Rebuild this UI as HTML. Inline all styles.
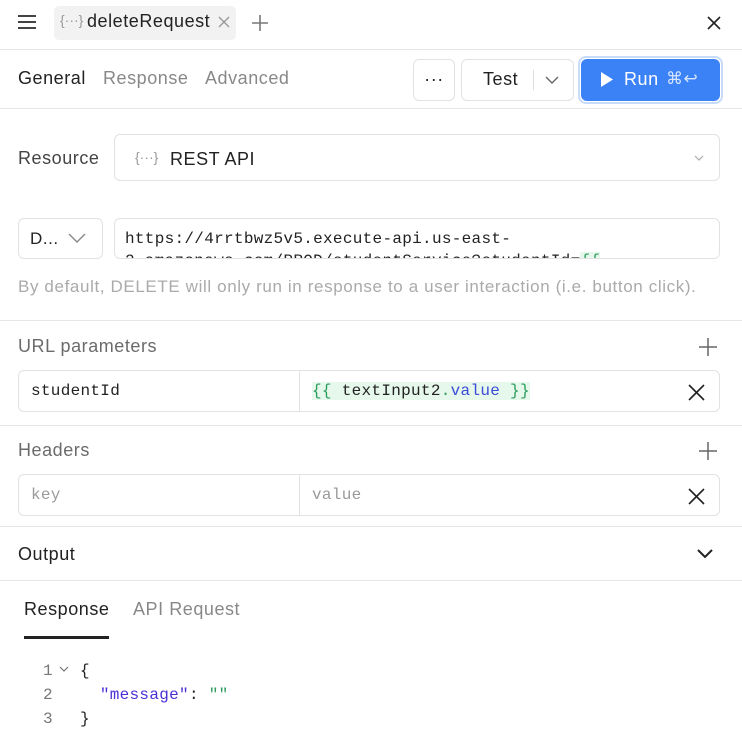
<!DOCTYPE html>
<html><head><meta charset="utf-8"><style>
*{box-sizing:border-box;margin:0;padding:0}
body{width:742px;height:736px;overflow:hidden;background:#fff;font-family:"Liberation Sans",sans-serif;color:#222;position:relative;letter-spacing:0.55px}
.a{position:absolute;white-space:nowrap}
.mono{font-family:"Liberation Mono",monospace;letter-spacing:0.3px}
.box{border:1px solid #e2e2e2;border-radius:6px;background:#fff}
.hr{position:absolute;left:0;width:742px;height:1px;background:#e6e6e6}
.lbl{font-size:18px;color:#6b6b6b}
</style></head><body>
<div class="a" style="left:18px;top:15px;width:18px;height:14px;border-top:2px solid #444;border-bottom:2px solid #444"><div style="margin-top:4px;height:2px;background:#444"></div></div>
<div class="a" style="left:54px;top:6px;width:182px;height:34px;background:#f2f2f2;border-radius:5px"></div>
<div class="a" style="left:60px;top:12px;font-size:14px;color:#999;letter-spacing:0">{···}</div>
<div class="a" style="left:87px;top:11px;font-size:18px;color:#222">deleteRequest</div>
<svg class="a" style="left:217px;top:15px" width="14" height="14"><path d="M2 2L12 12M12 2L2 12" stroke="#999" stroke-width="1.4"/></svg>
<svg class="a" style="left:251px;top:14px" width="18" height="18"><path d="M9 1V17M1 9H17" stroke="#777" stroke-width="1.6"/></svg>
<svg class="a" style="left:707px;top:16px" width="14" height="14"><path d="M1 1L13 13M13 1L1 13" stroke="#222" stroke-width="1.6"/></svg>
<div class="hr" style="top:49px"></div>
<div class="a" style="left:18px;top:68px;font-size:18px;color:#222">General</div>
<div class="a" style="left:103px;top:68px;font-size:18px;color:#888">Response</div>
<div class="a" style="left:205px;top:68px;font-size:18px;color:#888">Advanced</div>
<div class="a box" style="left:413px;top:59px;width:42px;height:42px;text-align:center;font-size:18px;line-height:38px">···</div>
<div class="a box" style="left:461px;top:59px;width:113px;height:42px"></div>
<div class="a" style="left:483px;top:69px;font-size:18px">Test</div>
<div class="a" style="left:533px;top:70px;width:1px;height:20px;background:#ddd"></div>
<svg class="a" style="left:545px;top:75px" width="14" height="10"><path d="M1 2L7 8L13 2" stroke="#666" stroke-width="1.4" fill="none"/></svg>
<div class="a" style="left:578px;top:56px;width:145px;height:48px;border:2px solid #c8dbfb;border-radius:8px"></div>
<div class="a" style="left:581px;top:59px;width:139px;height:42px;background:#3b82f6;border-radius:6px"></div>
<svg class="a" style="left:600px;top:71px" width="14" height="17"><path d="M1 1 L13 8.5 L1 16Z" fill="#fff"/></svg>
<div class="a" style="left:624px;top:69px;font-size:18px;color:#fff">Run</div>
<div class="a" style="left:666px;top:69px;font-size:17px;color:#d6e4fd">⌘↩</div>
<div class="hr" style="top:108px"></div>
<div class="a" style="left:18px;top:148px;font-size:18px;color:#444">Resource</div>
<div class="a box" style="left:114px;top:134px;width:606px;height:47px"></div>
<div class="a" style="left:135px;top:149px;font-size:14px;color:#999;letter-spacing:0">{···}</div>
<div class="a" style="left:170px;top:149px;font-size:18px;color:#222">REST API</div>
<svg class="a" style="left:694px;top:155px" width="10" height="7"><path d="M1 1L5 5L9 1" stroke="#aaa" stroke-width="1.2" fill="none"/></svg>
<div class="a box" style="left:18px;top:218px;width:85px;height:41px"></div>
<div class="a" style="left:30px;top:229px;font-size:17px">D...</div>
<svg class="a" style="left:68px;top:233px" width="18" height="11"><path d="M1 1L9 9L17 1" stroke="#888" stroke-width="1.4" fill="none"/></svg>
<div class="a box" style="left:114px;top:218px;width:606px;height:41px;overflow:hidden">
<div class="mono" style="position:absolute;left:10px;top:9px;font-size:16px;line-height:22px;color:#222;white-space:nowrap">https://4rrtbwz5v5.execute-api.us-east-<br>2.amazonaws.com/PROD/studentService?studentId=<span style="background:#e6f7ec;color:#2a9d5c">{{</span></div></div>
<div class="a" style="left:18px;top:277px;font-size:17px;color:#aaa;letter-spacing:0.62px">By default, DELETE will only run in response to a user interaction (i.e. button click).</div>
<div class="hr" style="top:320px"></div>
<div class="a lbl" style="left:18px;top:336px">URL parameters</div>
<svg class="a" style="left:698px;top:337px" width="20" height="20"><path d="M10 1V19M1 10H19" stroke="#666" stroke-width="1.5"/></svg>
<div class="a box" style="left:18px;top:370px;width:702px;height:42px"></div>
<div class="a" style="left:299px;top:371px;width:1px;height:40px;background:#e2e2e2"></div>
<div class="a mono" style="left:31px;top:382px;font-size:16px">studentId</div>
<div class="a mono" style="left:312px;top:382px;font-size:16px;background:#e6f7ec;color:#2a9d5c">{{ <span style="color:#222">textInput2</span>.<span style="color:#3b4bd8">value</span> }}</div>
<svg class="a" style="left:688px;top:384px" width="17" height="17"><path d="M1 1L16 16M16 1L1 16" stroke="#222" stroke-width="1.6"/></svg>
<div class="hr" style="top:425px"></div>
<div class="a lbl" style="left:18px;top:440px">Headers</div>
<svg class="a" style="left:698px;top:441px" width="20" height="20"><path d="M10 1V19M1 10H19" stroke="#666" stroke-width="1.5"/></svg>
<div class="a box" style="left:18px;top:474px;width:702px;height:42px"></div>
<div class="a" style="left:299px;top:475px;width:1px;height:40px;background:#e2e2e2"></div>
<div class="a mono" style="left:31px;top:486px;font-size:16px;color:#999">key</div>
<div class="a mono" style="left:312px;top:486px;font-size:16px;color:#999">value</div>
<svg class="a" style="left:688px;top:488px" width="17" height="17"><path d="M1 1L16 16M16 1L1 16" stroke="#222" stroke-width="1.6"/></svg>
<div class="hr" style="top:526px"></div>
<div class="a" style="left:18px;top:544px;font-size:18px;color:#222">Output</div>
<svg class="a" style="left:696px;top:548px" width="18" height="12"><path d="M2 2 L9 9 L16 2" stroke="#222" stroke-width="2" fill="none"/></svg>
<div class="hr" style="top:580px"></div>
<div class="a" style="left:24px;top:599px;font-size:18px;color:#222">Response</div>
<div class="a" style="left:133px;top:599px;font-size:18px;color:#888">API Request</div>
<div class="a" style="left:24px;top:636px;width:85px;height:3px;background:#222"></div>
<div class="a mono" style="left:43px;top:659px;font-size:16px;line-height:24px;color:#777">1<br>2<br>3</div>
<svg class="a" style="left:59px;top:666px" width="10" height="7"><path d="M1 1L5 5L9 1" stroke="#777" stroke-width="1.2" fill="none"/></svg>
<div class="a mono" style="left:80px;top:659px;font-size:16px;line-height:24px;color:#222;white-space:pre">{
  <span style="color:#4b2fd4">"message"</span>: <span style="color:#2a9d5c">""</span>
}</div>
</body></html>
